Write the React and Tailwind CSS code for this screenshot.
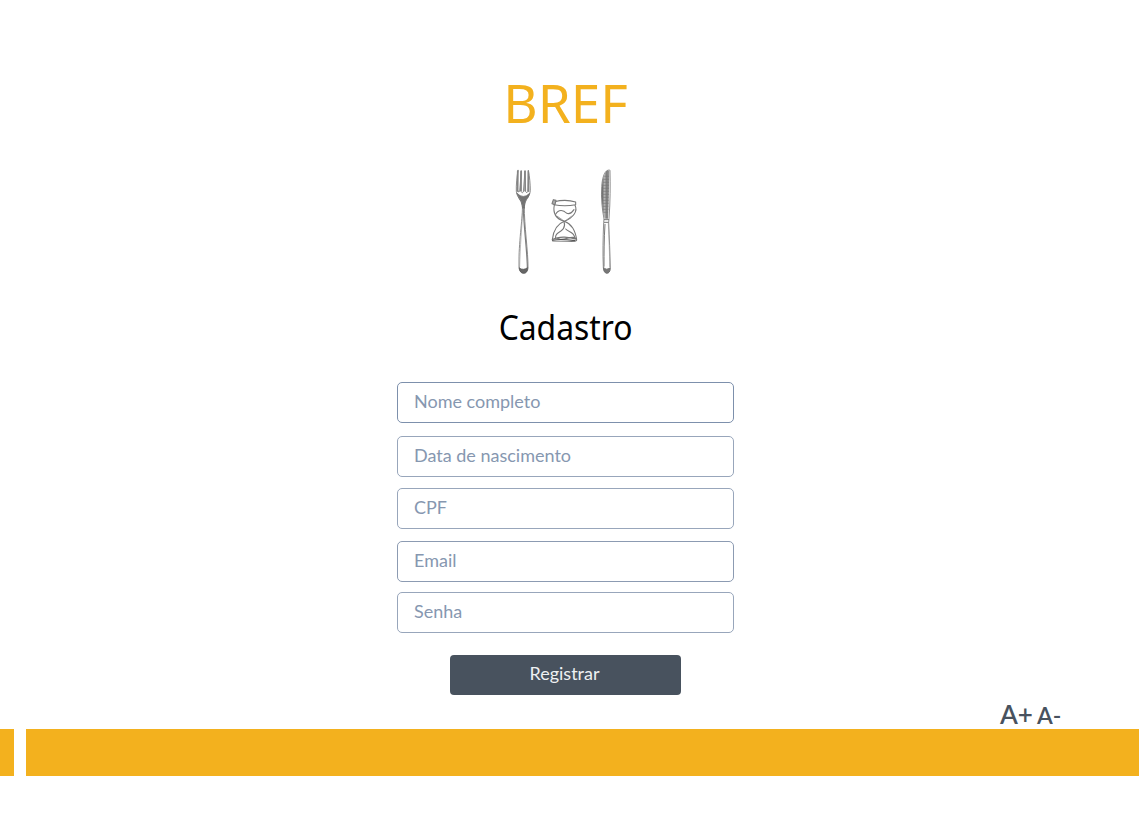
import React from 'react';

const fields = [
  { label: 'Nome completo', type: 'text', style: 'mt-[32px] h-[41px] border-[#7d90ac]' },
  { label: 'Data de nascimento', type: 'text', style: 'mt-[13px] h-[41px] border-[#98a6bb]' },
  { label: 'CPF', type: 'text', style: 'mt-[11px] h-[41px] border-[#98a6bb]' },
  { label: 'Email', type: 'email', style: 'mt-[12px] h-[41px] border-[#8c9bb2]' },
  { label: 'Senha', type: 'password', style: 'mt-[10px] h-[41px] border-[#98a6bb]' },
];

function CutleryLogo() {
  return (
    <svg className="h-[120px] w-[130px]" viewBox="0 0 390 360" fill="none" strokeLinecap="round" strokeLinejoin="round" aria-hidden="true">
      <defs>
        <linearGradient id="steel" x1="0" y1="0" x2="1" y2="0">
          <stop offset="0" stopColor="#5c5c5c" />
          <stop offset="0.35" stopColor="#b4b4b4" />
          <stop offset="0.65" stopColor="#7c7c7c" />
          <stop offset="1" stopColor="#999" />
        </linearGradient>
      </defs>
      {/* fork */}
      <path d="M51 31C48 50 45 75 46 94C47 112 61 118 64 137C66 165 54 240 54 300V322C55 344 80 345 81 324C82 280 69 190 70 140C72 117 86 112 88 92C88 74 86 50 82 31L80 94Q78 102 74 95L72 32L67 96Q64 102 61 95L61 32L56 94Q52 100 51 91Z" fill="#fff" stroke="#777" strokeWidth="2.5" />
      <path d="M48 100Q67 119 86 100Q83 113 75 119Q70 126 70 145H65Q63 122 56 117Z" fill="#747474" stroke="#666" strokeWidth="2" />
      <path d="M50 34L49 94M60 34L59 92M72 34L72 92M82 34L83 94" stroke="#848484" strokeWidth="4.5" />
      <path d="M67 146C68 195 78 270 79 320" stroke="#7c7c7c" strokeWidth="3.5" />
      <path d="M65 150C63 200 57 260 56 320" stroke="#999" strokeWidth="2" />
      <path d="M55 324Q68 333 80 322Q80 340 68 340Q56 340 55 324Z" fill="#666" stroke="#555" strokeWidth="2" />
      {/* hourglass */}
      <g stroke="#777" strokeWidth="3.2">
        <path d="M160 125C177 121 205 120 224 126V134C205 138 178 138 159 134Z" />
        <path d="M157 119L165 121L162 134L153 131Z" fill="#aaa" />
        <path d="M160 135C154 164 167 177 190 184C213 193 222 210 227 238" />
        <path d="M222 136C231 153 218 172 190 184C168 192 157 212 154 239" />
        <path d="M164 163C173 145 189 151 196 159C207 165 215 155 219 149" />
        <path d="M169 169Q180 176 190 184M194 182L211 169" strokeWidth="2" />
        <path d="M189 185C195 203 184 211 171 219C164 224 163 231 164 236M194 207C202 216 219 216 221 232" />
        <path d="M154 239C174 227 208 231 226 238C231 245 214 245 201 244L155 243C151 238 163 231 176 237C193 241 213 225 225 235" />
        <path d="M156 241C176 235 202 239 222 242" stroke="#555" />
      </g>
      {/* knife */}
      <path d="M325 30C311 28 304 52 302 80C300 113 303 145 309 177L308 188C306 235 305 280 307 323C308 344 327 344 328 324C327 280 325 235 323 187L324 176C328 125 328 75 327 33Z" fill="#fff" stroke="#777" strokeWidth="2.5" />
      <path d="M319 31C309 37 304 59 303 84C301 115 304 145 310 176H321C324 126 324 75 325 33Z" fill="url(#steel)" />
      <path d="M311 49H323M309 58H323M307 67H323M306 76H323M305 85H323M304 94H323M304 103H323M304 112H322M304 121H322M305 130H322M306 139H321M307 148H321M308 157H320" stroke="#777" strokeWidth="2" />
      <path d="M310 179H323M310 187H322" stroke="#777" strokeWidth="3" />
      <path d="M312 193C309 238 309 280 309 319" stroke="#777" strokeWidth="3" />
      <path d="M322 191C324 240 326 280 326 320" stroke="#999" strokeWidth="2" />
      <path d="M308 324Q317 331 327 324Q328 340 317 340Q308 339 308 324Z" fill="#777" stroke="#666" strokeWidth="2" />
    </svg>
  );
}

export default function App() {
  return (
    <div className="flex h-[825px] w-full flex-col overflow-hidden bg-white font-['Lato',sans-serif]">
      <main className="ml-[397px] flex w-[337px] flex-col items-center">
        <h1 className="mt-[67px] h-[72px] font-['Noto_Sans',sans-serif] text-[53px] leading-[72px] whitespace-nowrap text-[#f3b11e]">BREF</h1>
        <div className="mt-[21px]"><CutleryLogo /></div>
        <h2 className="mt-[20px] h-[50px] origin-center scale-x-[0.91] font-['Noto_Sans',sans-serif] text-[35px] leading-[54px] whitespace-nowrap text-black">Cadastro</h2>
        <form className="flex w-full flex-col items-center" onSubmit={(e) => e.preventDefault()}>
          {fields.map((f) => (
            <input key={f.label} type={f.type} placeholder={f.label} aria-label={f.label}
              className={`w-full rounded-[5px] border bg-white pr-4 pb-[3px] pl-[16px] text-[18px] text-[#8697b0] outline-none placeholder:text-[#8697b0] ${f.style}`} />
          ))}
          <button className="mt-[22px] h-[40px] w-[231px] rounded-[4px] bg-[#48525e] pr-[2px] pb-[3px] text-[18px] text-[#eef0f2]">Registrar</button>
        </form>
      </main>
      <div className="ml-[1000px] flex h-[34px] items-baseline gap-[4px] font-semibold text-[#48525e]">
        <button className="text-[26px] leading-[38px]">A+</button>
        <button className="text-[23px] leading-[38px]">A-</button>
      </div>
      <footer className="flex h-[47px] shrink-0 gap-[12px]">
        <div className="w-[14px] bg-[#f3b11e]" />
        <div className="flex-1 bg-[#f3b11e]" />
      </footer>
    </div>
  );
}
